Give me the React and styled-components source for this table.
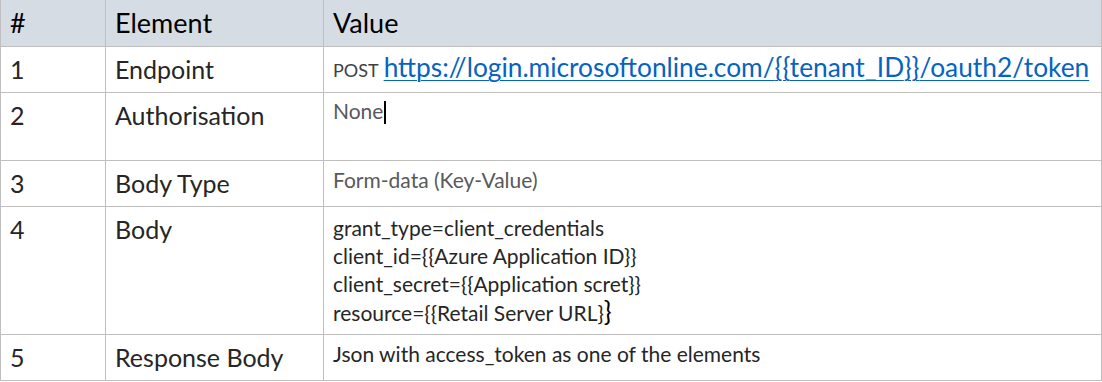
import React from "react";
import styled, { createGlobalStyle } from "styled-components";

const GlobalStyle = createGlobalStyle`
  html, body {
    margin: 0;
    padding: 0;
    background: #ffffff;
  }
  body {
    font-family: Lato, "Open Sans", sans-serif;
  }
`;

const Table = styled.div`
  width: 1102px;
  display: flex;
  flex-direction: column;
`;

const Row = styled.div`
  display: grid;
  grid-template-columns: 106px 218px 778px;
  height: ${(p) => p.$h}px;
  background: ${(p) => (p.$head ? "#d6dce4" : "#ffffff")};
`;

const Cell = styled.div`
  box-sizing: border-box;
  border-right: 1px solid #bfbfbf;
  border-bottom: 1px solid #bfbfbf;
  border-left: ${(p) => (p.$first ? "1px solid #bfbfbf" : "none")};
  padding: ${(p) => (p.$head ? "8px 0 0 9px" : "7px 0 0 9px")};
  font-size: ${(p) => (p.$head ? 27 : 25)}px;
  line-height: 30px;
  color: ${(p) => (p.$head ? "#000000" : "#262626")};
  white-space: nowrap;
  overflow: hidden;
`;

const Value = styled.div`
  box-sizing: border-box;
  border-right: 1px solid #bfbfbf;
  border-bottom: 1px solid #bfbfbf;
  padding: ${(p) => p.$pad || "6px 0 0 9px"};
  font-size: ${(p) => p.$size || 21}px;
  line-height: 28px;
  color: ${(p) => p.$color || "#595959"};
  white-space: nowrap;
  overflow: hidden;
`;

const Method = styled.span`
  font-size: 18px;
  color: #404040;
  margin-right: 5px;
`;

const Link = styled.a`
  font-size: 26.3px;
  color: #0563c1;
  text-decoration: underline;
  text-decoration-thickness: 1px;
  text-underline-offset: 3px;
`;

const Caret = styled.span`
  display: inline-block;
  width: 2px;
  height: 23px;
  margin-left: 1px;
  background: #000;
  vertical-align: -5px;
`;

const BodyLines = styled.div`
  display: flex;
  flex-direction: column;
`;

const BigBrace = styled.span`
  font-size: 26px;
  line-height: 26px;
  color: #000;
`;

const rows = [
  { n: "1", el: "Endpoint", h: 46 },
  { n: "2", el: "Authorisation", h: 68 },
  { n: "3", el: "Body Type", h: 46 },
  { n: "4", el: "Body", h: 128 },
  { n: "5", el: "Response Body", h: 46 },
];

const renderValue = (n) => {
  switch (n) {
    case "1":
      return (
        <Value $pad="6px 0 0 9px">
          <Method>POST</Method>
          <Link href="#">
            https://login.microsoftonline.com/{"{{"}tenant_ID{"}}"}/oauth2/token
          </Link>
        </Value>
      );
    case "2":
      return (
        <Value $pad="4px 0 0 9px">
          None
          <Caret />
        </Value>
      );
    case "3":
      return <Value $pad="5px 0 0 9px">Form-data (Key-Value)</Value>;
    case "4":
      return (
        <Value $color="#262626" $pad="7px 0 0 9px">
          <BodyLines>
            <span>grant_type=client_credentials</span>
            <span>client_id={"{{"}Azure Application ID{"}}"}</span>
            <span>client_secret={"{{"}Application scret{"}}"}</span>
            <span>
              resource={"{{"}Retail Server URL{"}"}
              <BigBrace>{"}"}</BigBrace>
            </span>
          </BodyLines>
        </Value>
      );
    default:
      return (
        <Value $color="#262626" $pad="5px 0 0 9px">
          Json with access_token as one of the elements
        </Value>
      );
  }
};

export default function App() {
  return (
    <>
      <GlobalStyle />
      <Table>
        <Row $h={47} $head>
          <Cell $first $head>#</Cell>
          <Cell $head>Element</Cell>
          <Cell $head>Value</Cell>
        </Row>
        {rows.map((r) => (
          <Row key={r.n} $h={r.h}>
            <Cell $first>{r.n}</Cell>
            <Cell>{r.el}</Cell>
            {renderValue(r.n)}
          </Row>
        ))}
      </Table>
    </>
  );
}
